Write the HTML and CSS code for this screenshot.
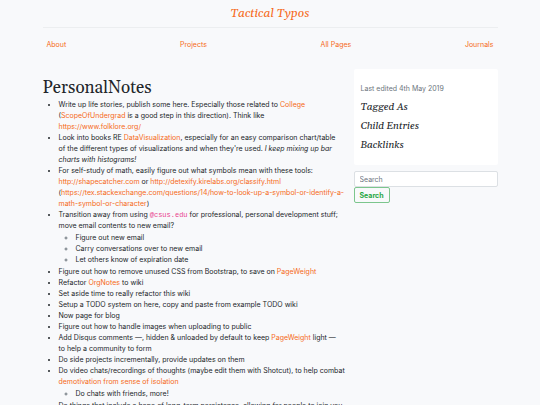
FILE: index.html
```html
<!DOCTYPE html>
<html lang="en">
<head>
    <meta charset="UTF-8">
    <meta name="viewport" content="width=device-width, initial-scale=1.0">
    <title>PersonalNotes</title>
    <link rel="stylesheet" href="styles.css">
</head>
<body>
    <div class="container">
        <header class="site-header">
            <a class="site-title" href="#">Tactical Typos</a>
        </header>

        <nav class="site-nav">
            <a href="#">About</a>
            <a href="#">Projects</a>
            <a href="#">All Pages</a>
            <a href="#">Journals</a>
        </nav>

        <div class="row">
            <main class="entry">
                <h1 class="entry-title">PersonalNotes</h1>
                <ul class="notes">
                    <li>Write up life stories, publish some here. Especially those related to <a href="#">College</a> (<a href="#">ScopeOfUndergrad</a> is a good step in this direction). Think like <a href="#">https://www.folklore.org/</a></li>
                    <li>Look into books RE <a href="#">DataVisualization</a>, especially for an easy comparison chart/table of&nbsp;the different types of visualizations and when they're used. <em>I keep mixing up bar charts with histograms!</em></li>
                    <li>For self-study of math, easily figure out what symbols mean with these tools: <a href="#">http://shapecatcher.com</a> or <a href="#">http://detexify.kirelabs.org/classify.html</a> (<a href="#">https://tex.stackexchange.com/questions/14/how-to-look-up-a-symbol-or-identify-a-math-symbol-or-character</a>)</li>
                    <li>Transition away from using <code>@csus.edu</code> for professional, personal development stuff; move email contents to new email?
                        <ul>
                            <li>Figure out new email</li>
                            <li>Carry conversations over to new email</li>
                            <li>Let others know of expiration date</li>
                        </ul>
                    </li>
                    <li>Figure out how to remove unused CSS from Bootstrap, to save on <a href="#">PageWeight</a></li>
                    <li>Refactor <a href="#">OrgNotes</a> to wiki</li>
                    <li>Set aside time to really refactor this wiki</li>
                    <li>Setup a TODO system on here, copy and paste from example TODO wiki</li>
                    <li>Now page for blog</li>
                    <li>Figure out how to handle images when uploading to public</li>
                    <li>Add Disqus comments —, hidden &amp; unloaded by default to keep <a href="#">PageWeight</a> light — to&nbsp;help a community to form</li>
                    <li>Do side projects incrementally, provide updates on them</li>
                    <li>Do video chats/recordings of thoughts (maybe edit them with Shotcut), to help combat <a href="#">demotivation from sense of isolation</a>
                        <ul>
                            <li>Do chats with friends, more!</li>
                        </ul>
                    </li>
                    <li>Do things that include a hope of long-term persistence, allowing for people to join you</li>
                </ul>
            </main>

            <aside class="sidebar">
                <div class="card">
                    <p class="last-edited">Last edited 4th May 2019</p>
                    <h2>Tagged As</h2>
                    <h2>Child Entries</h2>
                    <h2>Backlinks</h2>
                </div>
                <form class="search">
                    <input type="search" placeholder="Search" aria-label="Search">
                    <button type="submit">Search</button>
                </form>
            </aside>
        </div>
    </div>
</body>
</html>
```
FILE: styles.css
```css
* {
    box-sizing: border-box;
}

html {
    overflow: hidden;
}

body {
    margin: 0;
    background-color: #f8f9fb;
    color: #212529;
    font-family: Inter, "Liberation Sans", Arial, sans-serif;
    font-size: 7px;
    line-height: 11px;
}

a {
    color: #f66a20;
    text-decoration: none;
}

h1, h2, .site-title {
    font-family: Gelasio, Georgia, serif;
    font-weight: 400;
}

.container {
    width: 85%;
    margin: 0 auto;
    padding: 0 2px;
}

.site-header {
    padding: 7px 0 6px;
    border-bottom: 1px solid #eceef0;
    text-align: center;
}

.site-title {
    display: block;
    font-size: 12px;
    line-height: 14px;
    font-style: italic;
}

.site-nav {
    display: flex;
    justify-content: space-between;
    padding: 11px 4px;
}

.row {
    display: grid;
    grid-template-columns: 304fr 144fr;
    gap: 7px;
    align-items: start;
    padding-top: 8px;
}

.entry {
    padding-top: 9px;
}

.entry-title {
    margin: 0 0 1px;
    font-size: 17px;
    line-height: 20px;
}

.notes {
    margin: 0;
    padding-left: 16px;
}

.notes ul {
    margin: 0;
    padding: 1px 0 1px 17px;
}

.notes ul li::marker {
    color: #6c757d;
}

code {
    color: #e83e8c;
    font-family: "Liberation Mono", monospace;
    font-size: 7px;
    line-height: 1;
}

.card {
    margin-bottom: 6px;
    padding: 14px 7px 8px;
    background-color: #fff;
    border-radius: 2px;
}

.card p {
    margin: 0 0 6px;
    color: #6c757d;
}

.card h2 {
    margin: 0 0 4px;
    font-size: 10px;
    line-height: 15px;
    font-style: italic;
}

.search input,
.search button {
    display: block;
    height: 16px;
    padding: 0 5px;
    border: 1px solid #dce0e4;
    border-radius: 2px;
    font-family: inherit;
    font-size: 7px;
    line-height: 11px;
}

.search input {
    width: 100%;
    background-color: #fff;
    appearance: none;
}

.search input::placeholder {
    color: #6c757d;
}

.search button {
    border-color: #7cc68d;
    background-color: transparent;
    color: #28a745;
    font-weight: 700;
}
```
